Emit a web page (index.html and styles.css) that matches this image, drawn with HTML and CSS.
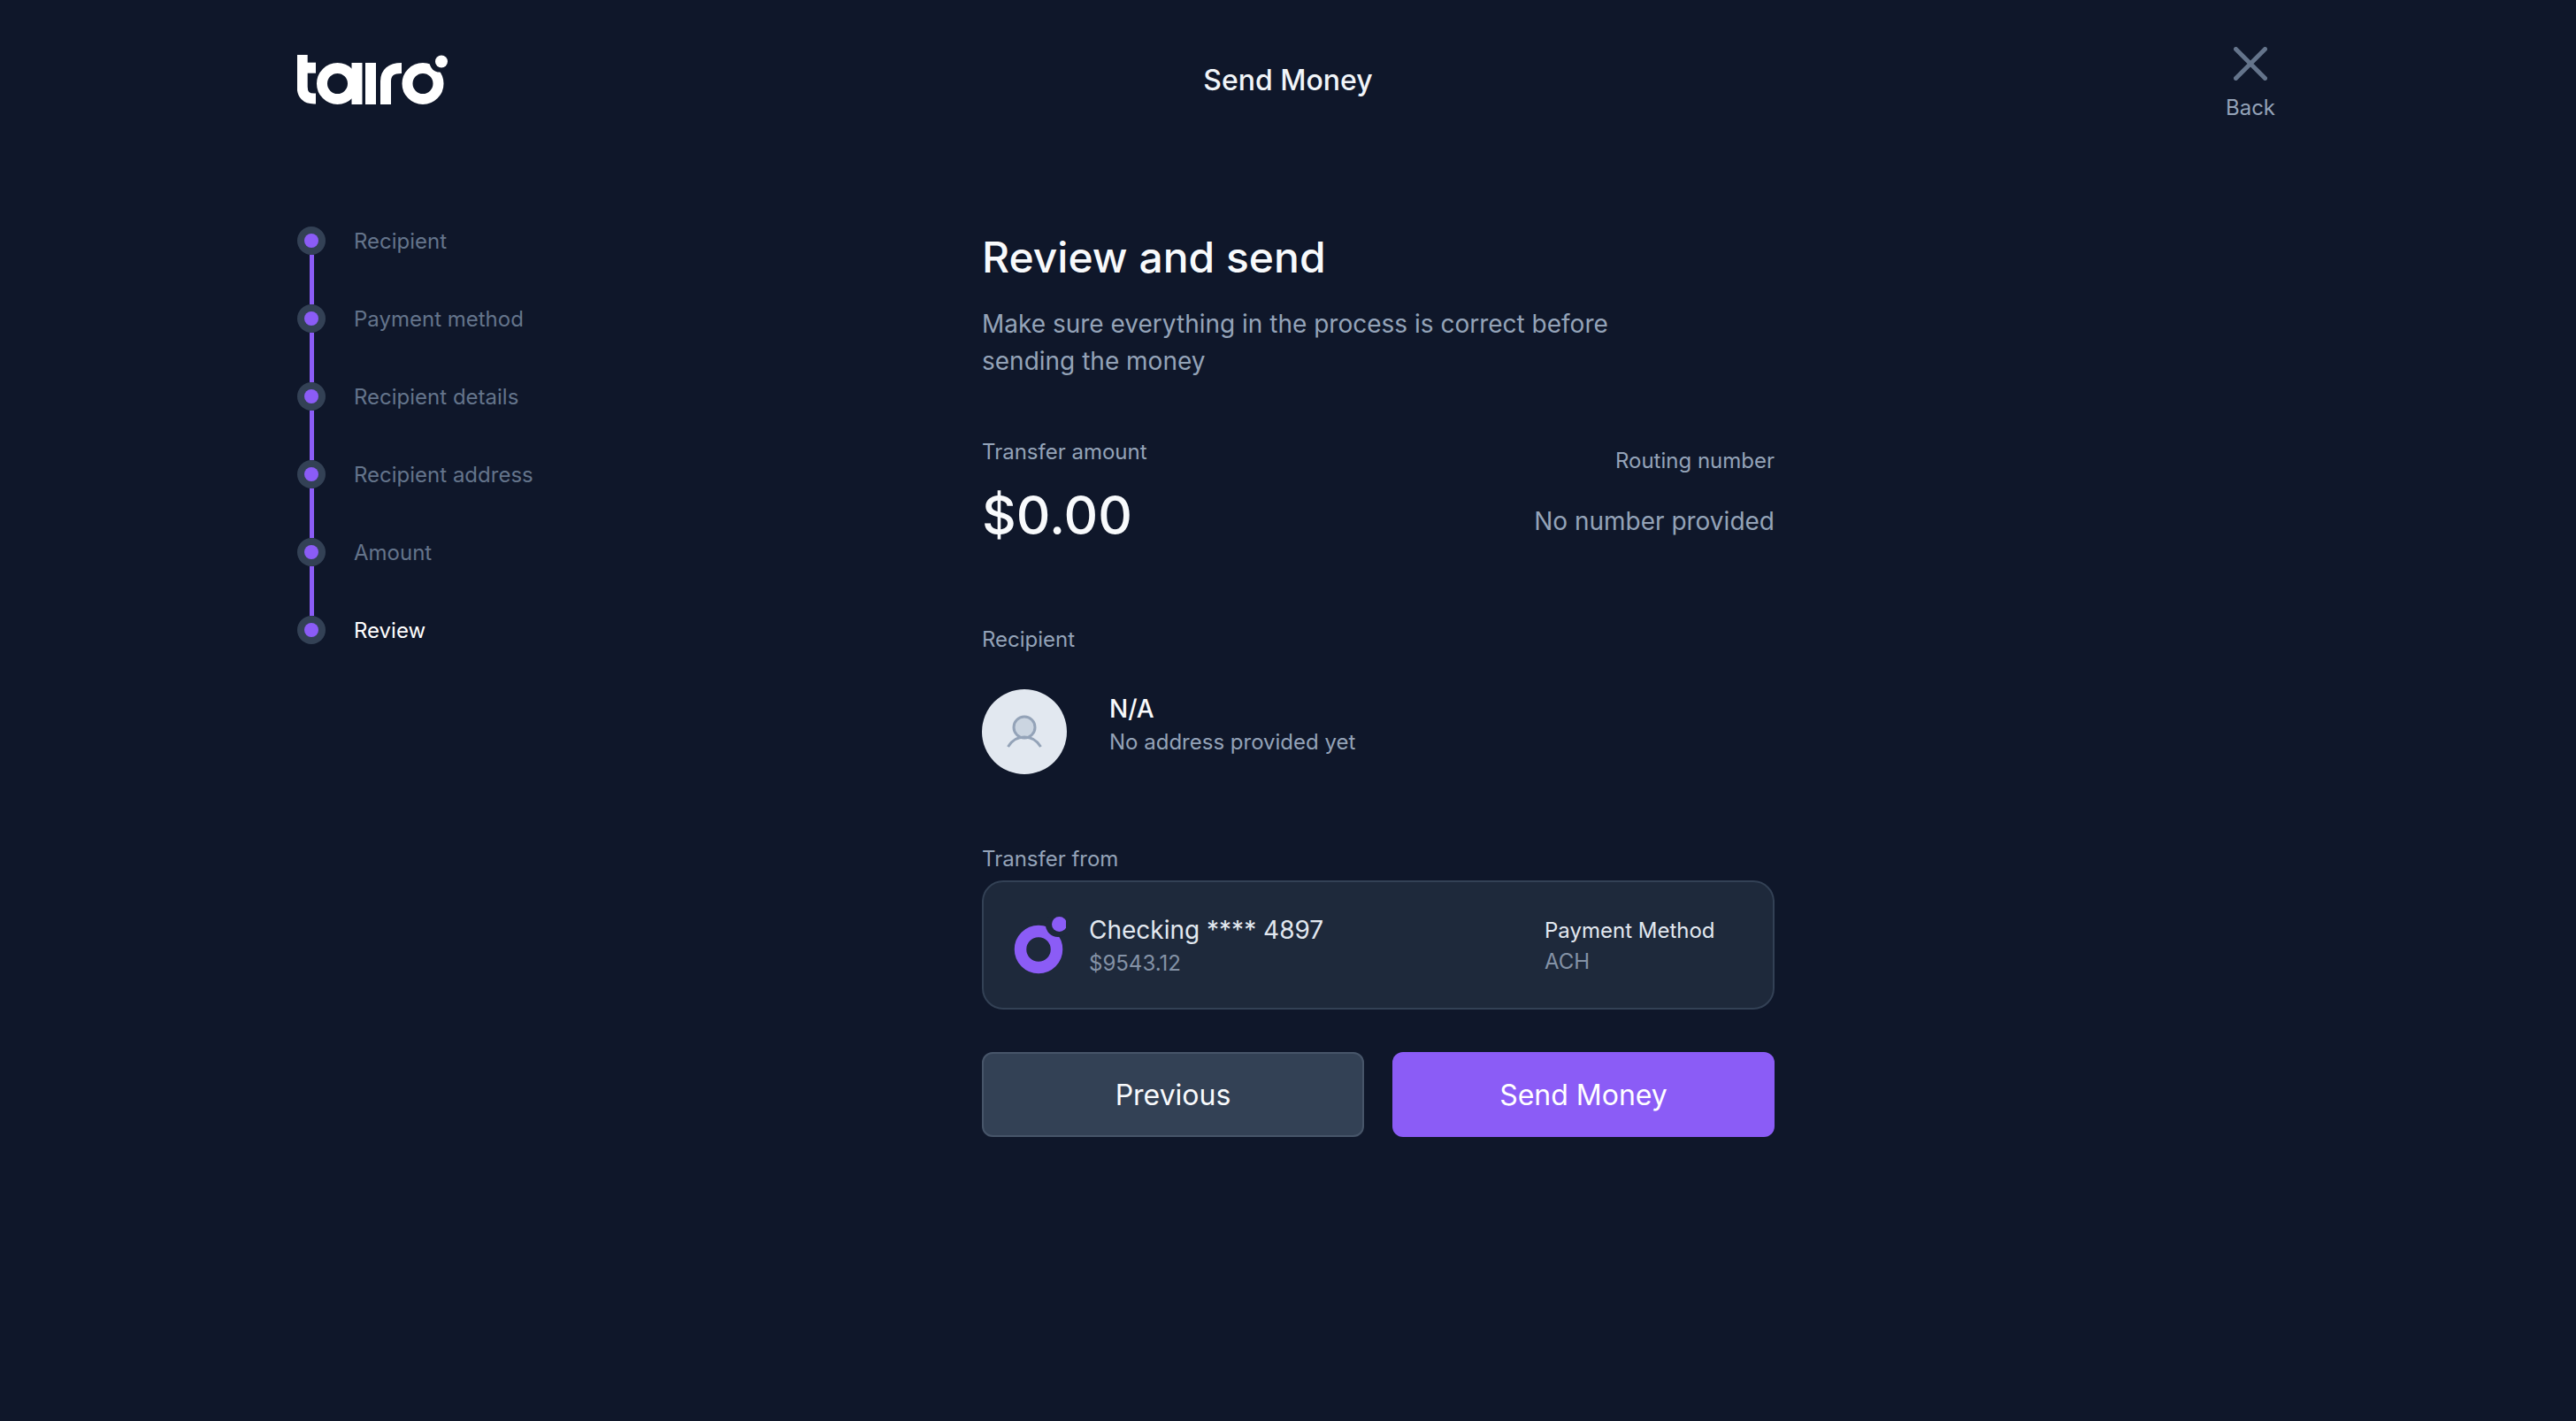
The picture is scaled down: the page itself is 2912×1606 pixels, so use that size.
FILE: index.html
```html
<!DOCTYPE html>
<html lang="en">
  <head>
    <title>Send Money</title>
    <meta charset="UTF-8">
    <link rel="stylesheet" href="styles.css">
  </head>
  <body>
    <div class="page">
      <header class="topbar">
        <svg class="logo" viewBox="0 0 170 56" width="170" height="56">
          <g fill="none" stroke="#fff" stroke-width="12">
            <path d="M5.700 0V36Q5.700 49.500 19 49.500H21"/>
            <path d="M0 14.700H21"/>
            <circle cx="45.500" cy="32.500" r="17.500"/>
            <path d="M67.500 9V56"/>
            <path d="M83 9V56"/>
            <path d="M100 56V30Q100 15 118 15"/>
            <circle cx="142" cy="32.500" r="17.500"/>
          </g>
          <circle cx="161" cy="8" r="11.500" fill="#0f172a"/>
          <circle cx="163" cy="7.500" r="7" fill="#fff"/>
        </svg>
        <div class="topbar__title">Send Money</div>
        <a class="back" href="#">
          <svg viewBox="0 0 38 38" width="38" height="38">
            <path d="M2.500 2.500L35.500 35.500M35.500 2.500L2.500 35.500" fill="none" stroke="#64748b" stroke-width="5" stroke-linecap="round"/>
          </svg>
          <span>Back</span>
        </a>
      </header>

      <div class="layout">
        <ul class="steps">
          <li class="step"><span class="step__dot"></span>Recipient</li>
          <li class="step"><span class="step__dot"></span>Payment method</li>
          <li class="step"><span class="step__dot"></span>Recipient details</li>
          <li class="step"><span class="step__dot"></span>Recipient address</li>
          <li class="step"><span class="step__dot"></span>Amount</li>
          <li class="step step--active"><span class="step__dot"></span>Review</li>
        </ul>

        <main class="review">
          <h1 class="review__title">Review and send</h1>
          <p class="review__desc">Make sure everything in the process is correct before sending the money</p>

          <div class="summary">
            <div>
              <div class="label">Transfer amount</div>
              <div class="amount">$0.00</div>
            </div>
            <div class="routing">
              <div class="label">Routing number</div>
              <div class="routing__value">No number provided</div>
            </div>
          </div>

          <div class="label recipient-label">Recipient</div>
          <div class="recipient">
            <div class="avatar">
              <svg viewBox="0 0 96 96" width="96" height="96">
                <circle cx="48" cy="43" r="12" fill="#cbd5e1" stroke="#94a3b8" stroke-width="3"/>
                <path d="M29.500 65Q36 54 48 54T66.500 65" fill="none" stroke="#94a3b8" stroke-width="3"/>
              </svg>
            </div>
            <div class="recipient__text">
              <div class="recipient__name">N/A</div>
              <div class="recipient__addr">No address provided yet</div>
            </div>
          </div>

          <div class="label from-label">Transfer from</div>
          <div class="account">
            <svg class="account__icon" viewBox="0 0 60 66" width="60" height="66">
              <circle cx="29" cy="37" r="20.500" fill="none" stroke="#8b5cf6" stroke-width="13.500"/>
              <circle cx="51" cy="9" r="14" fill="#1e293b"/>
              <circle cx="52.500" cy="8.500" r="8.500" fill="#8b5cf6"/>
            </svg>
            <div class="account__main">
              <div class="account__name">Checking **** 4897</div>
              <div class="account__sub account__sub--low">$9543.12</div>
            </div>
            <div class="account__method">
              <div class="account__method-name">Payment Method</div>
              <div class="account__sub">ACH</div>
            </div>
          </div>

          <div class="actions">
            <button class="btn btn--secondary">Previous</button>
            <button class="btn btn--primary">Send Money</button>
          </div>
        </main>
      </div>
    </div>
  </body>
</html>
```

FILE: styles.css
```css
* {
  box-sizing: border-box;
}
html, body {
  margin: 0;
  padding: 0;
  height: 100%;
  background-color: #0f172a;
  font-family: 'Inter', sans-serif;
  color: #fff;
}

.page {
  width: 2240px;
  margin: 0 auto;
}

/* top bar */
.topbar {
  display: flex;
  justify-content: space-between;
  align-items: flex-start;
  position: relative;
  height: 228px;
  padding-top: 52px;
}
.logo {
  margin-top: 10px;
  display: block;
}
.topbar__title {
  font-size: 32px;
  line-height: 76px;
  color: #f1f5f9;
  font-weight: 500;
  position: absolute;
  left: 0;
  right: 0;
  text-align: center;
  top: 53px;
}
.back {
  display: flex;
  flex-direction: column;
  align-items: center;
  text-decoration: none;
  color: #94a3b8;
  font-size: 24px;
  line-height: 36px;
  width: 56px;
  margin-right: 4px;
  margin-top: 1px;
}
.back span { margin-top: 13px; }

/* steps */
.layout {
  display: grid;
  grid-template-columns: 774px 896px;
}
.steps {
  list-style: none;
  margin: 0;
  padding: 0;
}
.step {
  position: relative;
  display: flex;
  align-items: center;
  gap: 32px;
  height: 88px;
  font-size: 24px;
  color: #64748b;
}
.step--active { color: #fff; }
.step__dot {
  position: relative;
  z-index: 1;
  width: 32px;
  height: 32px;
  border-radius: 50%;
  background-color: #334155;
  display: flex;
  flex-shrink: 0;
}
.step__dot:after {
  content: '';
  margin: auto;
  width: 16px;
  height: 16px;
  border-radius: 50%;
  background-color: #8b5cf6;
}
.step:not(:last-child):after {
  content: '';
  position: absolute;
  left: 14px;
  top: 60px;
  width: 5px;
  height: 56px;
  background-color: #8b5cf6;
}

/* review */
.review {
  padding-top: 31px;
}
.review__title {
  margin: 0;
  font-size: 48px;
  line-height: 64px;
  font-weight: 500;
  color: #f8fafc;
}
.review__desc {
  margin: 22px 0 0;
  max-width: 730px;
  font-size: 28px;
  line-height: 42px;
  color: #94a3b8;
}
.label {
  font-size: 24px;
  line-height: 32px;
  color: #94a3b8;
}
.summary {
  display: flex;
  justify-content: space-between;
  margin-top: 66px;
}
.amount {
  margin-top: 19px;
  font-size: 60px;
  line-height: 72px;
  font-weight: 450;
  color: #f8fafc;
}
.routing {
  text-align: right;
  padding-top: 10px;
}
.routing__value {
  margin-top: 32px;
  font-size: 28px;
  line-height: 40px;
  color: #94a3b8;
}
.recipient-label { margin-top: 89px; }
.recipient {
  display: flex;
  align-items: center;
  gap: 48px;
  margin-top: 40px;
}
.avatar {
  width: 96px;
  height: 96px;
  border-radius: 50%;
  background-color: #e2e8f0;
  flex-shrink: 0;
}
.recipient__text { margin-bottom: 17px; }
.recipient__name {
  font-size: 28px;
  line-height: 40px;
  font-weight: 500;
  color: #f8fafc;
}
.recipient__addr {
  font-size: 24px;
  line-height: 36px;
  color: #94a3b8;
}
.from-label { margin-top: 80px; }

/* account card */
.account {
  display: flex;
  align-items: center;
  height: 146px;
  margin-top: 8px;
  padding: 0 32px 0 33px;
  background-color: #1e293b;
  border: 2px solid #334155;
  border-radius: 24px;
}
.account__icon { flex-shrink: 0; margin-top: 2px; }
.account__main {
  flex-grow: 1;
  margin-left: 26px;
}
.account__method { width: 226px; }
.account__name {
  font-size: 28px;
  line-height: 40px;
  color: #e2e8f0;
}
.account__method-name {
  font-size: 24px;
  line-height: 38px;
  color: #e2e8f0;
}
.account__sub {
  font-size: 24px;
  line-height: 32px;
  color: #8492a6;
}
.account__sub--low { margin-top: 2px; }

/* buttons */
.actions {
  display: flex;
  gap: 32px;
  margin-top: 48px;
}
.btn {
  flex: 1;
  height: 96px;
  border-radius: 12px;
  font-family: inherit;
  font-size: 32px;
  color: #f8fafc;
  border: 2px solid transparent;
}
.btn--secondary {
  background-color: #334155;
  border-color: #475569;
}
.btn--primary {
  background-color: #8b5cf6;
  color: #fff;
}
```
